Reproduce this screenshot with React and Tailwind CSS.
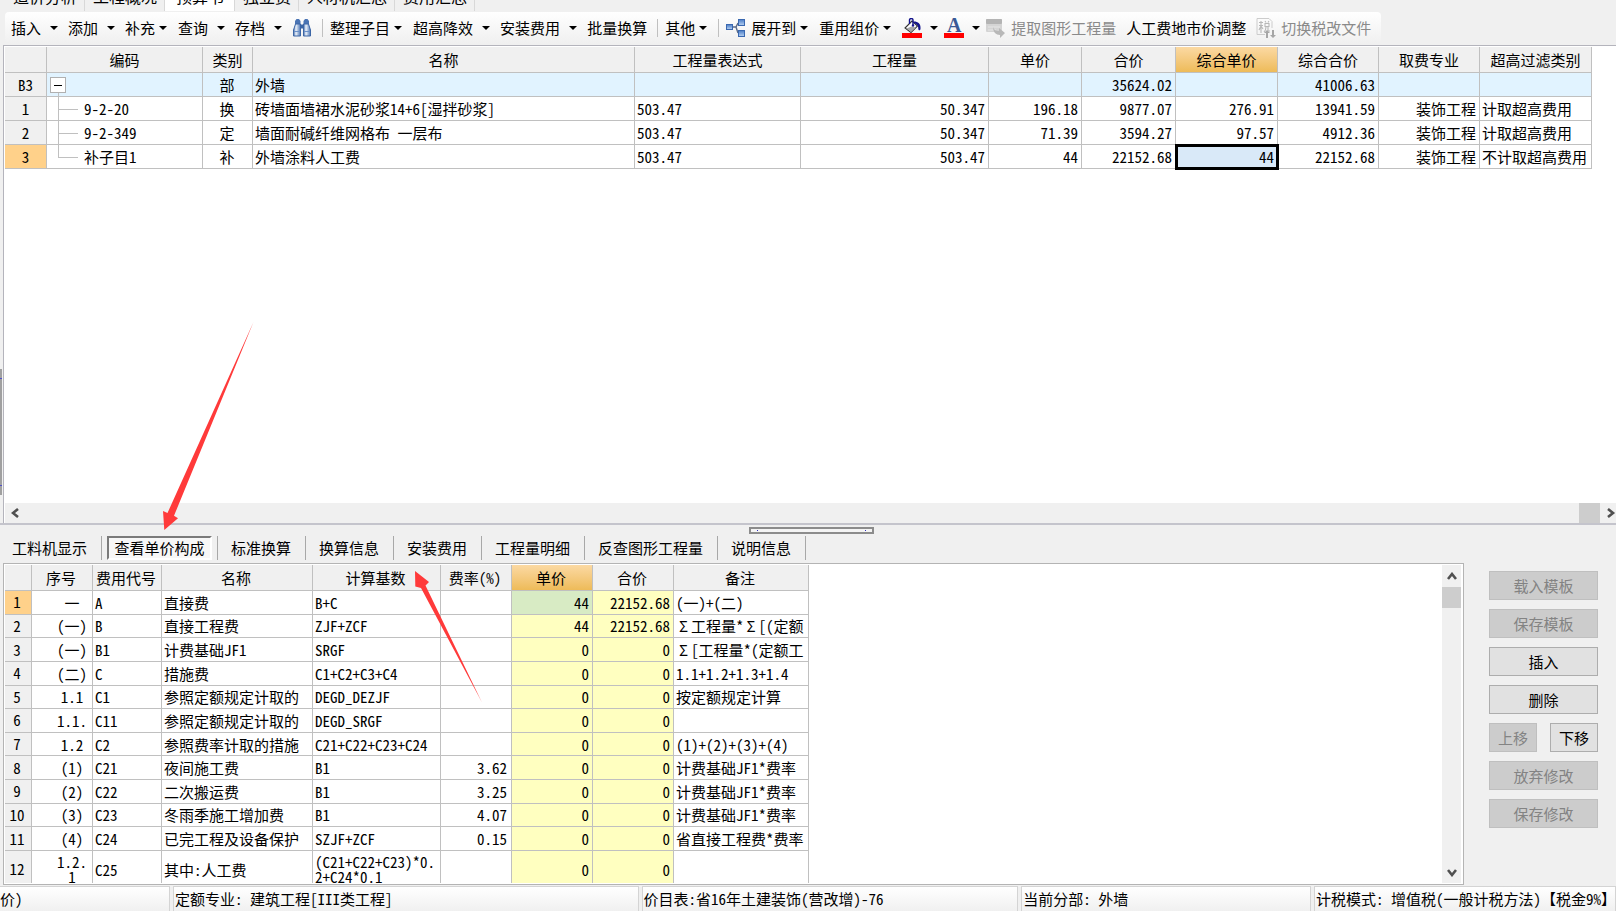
const fileTabs = ["造价分析", "工程概况", "预算书", "独立费", "人材机汇总", "费用汇总"];

function Caret() {
  return (
    <svg width="8" height="4" viewBox="0 0 8 4" className="shrink-0" aria-hidden="true">
      <path d="M0 0h8L4 4z" fill="#000" />
    </svg>
  );
}

function BinocularsIcon() {
  return (
    <svg width="20" height="18" viewBox="0 0 20 18" aria-hidden="true">
      <defs>
        <linearGradient id="bino" x1="0" x2="1">
          <stop offset="0" stopColor="#3c66a6" />
          <stop offset="0.35" stopColor="#eef4fc" />
          <stop offset="1" stopColor="#4a74b4" />
        </linearGradient>
      </defs>
      <path d="M4.500 0h2.500l1.500 2v3H3V2z" fill="#4a74b4" />
      <path d="M13 0h2.500L17 2v3h-5.500V2z" fill="#4a74b4" />
      <path d="M3.500 5h5v12h-7v-6z" fill="url(#bino)" stroke="#3c66a6" />
      <path d="M11.500 5h5l2 6v6h-7z" fill="url(#bino)" stroke="#3c66a6" />
      <path d="M8.500 5.500h3v4h-3z" fill="#3c66a6" />
      <path d="M2 12.500h6M12 12.500h6" stroke="#6a90c8" />
    </svg>
  );
}

function ExpandIcon() {
  return (
    <svg width="20" height="20" viewBox="0 0 20 20" aria-hidden="true">
      <defs>
        <linearGradient id="box" x1="0" y1="0" x2="0" y2="1">
          <stop offset="0" stopColor="#4a7cc6" />
          <stop offset="1" stopColor="#b8d2f2" />
        </linearGradient>
      </defs>
      <path d="M7 9h3L12 5M10 9l2 6" stroke="#5a6a88" strokeWidth="1.400" fill="none" />
      <rect x="0.500" y="6.500" width="6" height="5" fill="url(#box)" stroke="#3a68b0" />
      <rect x="12.500" y="1.500" width="6" height="6" fill="url(#box)" stroke="#3a68b0" />
      <rect x="12.500" y="12.500" width="6" height="6" fill="url(#box)" stroke="#3a68b0" />
    </svg>
  );
}

function FillIcon() {
  return (
    <svg width="20" height="20" viewBox="0 0 20 20" aria-hidden="true">
      <path d="M10 3l5.500 5-6.500 6.500L3 10z" fill="#fff" stroke="#333" strokeWidth="1.100" />
      <path d="M4.500 10.500l5-2 4.500 1-5 4.500z" fill="#a8a8a8" />
      <path d="M7.500 6V2C7.500 0 11 0 11 2v5" fill="none" stroke="#14148c" strokeWidth="1.400" />
      <circle cx="11" cy="7.500" r="1.200" fill="#14148c" />
      <path d="M12 3.500c4 0 7 2 6.500 7.500-.3 1.800-2 1.800-2.200 0C16.500 8 15 6 12 5z" fill="#14148c" />
      <rect x="0" y="15" width="20" height="5" fill="#f00" />
    </svg>
  );
}

function FontColorIcon() {
  return (
    <span className="flex h-5 w-5 flex-col items-center justify-end">
      <span className="font-['Liberation_Serif',serif] text-[20px] leading-[15px] font-bold text-[#3a5a96]">A</span>
      <span className="h-[5px] w-full bg-[#ff0000]" />
    </span>
  );
}

function ExtractIcon() {
  return (
    <svg width="20" height="20" viewBox="0 0 20 20" aria-hidden="true">
      <rect x="0" y="1" width="16" height="13" rx="1" fill="#d4d4d4" />
      <rect x="0" y="1" width="16" height="5" rx="1" fill="#b4b4b4" />
      <path d="M2 9h12M2 12h8" stroke="#e6e6e6" />
      <path d="M7 9c1 3 3 4 6 4v-3l6 5-5 5v-3c-4 0-7-3-7-8z" fill="#b8b8b8" />
    </svg>
  );
}

function TaxIcon() {
  return (
    <svg width="20" height="20" viewBox="0 0 20 20" aria-hidden="true">
      <path d="M1 .5h12l3 3V10M1 .5v16h8" fill="none" stroke="#cccccc" />
      <path d="M3 4.500h4M5 3v12M3 7.500h4M5 8l-2 4M5 8l2 3M9 3l1 1.500M13 3l-1 1.500M9 5.500h4v3H9zM10 9c0 3-1 4-2 5M12 9v4h2" fill="none" stroke="#b8b8b8" strokeWidth="1.100" />
      <path d="M11 12l3 3h-2v5h-2v-5H8z" fill="#a6a6a6" />
      <path d="M17 20l-3-3h2v-5h2v5h2z" fill="#a6a6a6" />
    </svg>
  );
}

const toolbar = [
  { label: "插入", kind: "split" },
  { label: "添加", kind: "split" },
  { label: "补充", kind: "menu" },
  { label: "查询", kind: "split" },
  { label: "存档", kind: "split" },
  { title: "查找", icon: BinocularsIcon },
  { kind: "sep" },
  { label: "整理子目", kind: "menu" },
  { label: "超高降效", kind: "split" },
  { label: "安装费用", kind: "split" },
  { label: "批量换算" },
  { kind: "sep" },
  { label: "其他", kind: "menu" },
  { kind: "sep" },
  { label: "展开到", kind: "menu", icon: ExpandIcon },
  { label: "重用组价", kind: "menu" },
  { title: "填充颜色", kind: "color", icon: FillIcon },
  { title: "字体颜色", kind: "color", icon: FontColorIcon },
  { label: "提取图形工程量", icon: ExtractIcon, disabled: true },
  { label: "人工费地市价调整" },
  { label: "切换税改文件", icon: TaxIcon, disabled: true },
];

const toolSpace = {
  menu: "gap-1 pr-[11px]",
  split: "gap-[9px] pr-[10px]",
  color: "gap-2 pr-[6px]",
};

function ToolItem({ item }) {
  if (item.kind === "sep") {
    return <span className="mr-[7px] h-[18px] w-px shrink-0 bg-[#c0c0c0]" />;
  }
  const Icon = item.icon;
  return (
    <button
      type="button"
      aria-label={item.label || item.title}
      disabled={item.disabled}
      className={`flex h-full shrink-0 items-center whitespace-nowrap disabled:text-[#8a8a8a] ${
        toolSpace[item.kind] || "pr-[10px]"
      }`}
    >
      <span className="flex items-center gap-[5px]">
        {Icon && <Icon />}
        {item.label}
      </span>
      {item.kind && <Caret />}
    </button>
  );
}

const grid1Heads = ["", "编码", "类别", "名称", "工程量表达式", "工程量", "单价", "合价", "综合单价", "综合合价", "取费专业", "超高过滤类别"];
const grid1Rows = [
  ["B3", "", "部", "外墙", "", "", "", "35624.02", "", "41006.63", "", ""],
  ["1", "9-2-20", "换", "砖墙面墙裙水泥砂浆14+6[湿拌砂浆]", "503.47", "50.347", "196.18", "9877.07", "276.91", "13941.59", "装饰工程", "计取超高费用"],
  ["2", "9-2-349", "定", "墙面耐碱纤维网格布 一层布", "503.47", "50.347", "71.39", "3594.27", "97.57", "4912.36", "装饰工程", "计取超高费用"],
  ["3", "补子目1", "补", "外墙涂料人工费", "503.47", "503.47", "44", "22152.68", "44", "22152.68", "装饰工程", "不计取超高费用"],
];
const grid1Align = ["text-center", "text-left", "text-center", "text-left", "text-left", "text-right", "text-right", "text-right", "text-right", "text-right", "text-right", "text-left"];

const cell = "overflow-hidden border-r border-b border-[#c0c0c0] p-0 whitespace-nowrap";
const headSel = "bg-linear-to-b from-[#fbd9a2] to-[#eebb58]";

function TreeCell({ text, root, last }) {
  if (root) {
    return (
      <div className="relative h-[23px]">
        <span className="absolute top-4 bottom-0 left-[11px] w-px bg-[#c0c0c0]" />
        <button
          type="button"
          aria-label="折叠"
          className="absolute top-1 left-[3px] flex h-4 w-4 items-center justify-center border border-[#b0b0b0] bg-white"
        >
          <span className="h-px w-2 bg-black" />
        </button>
      </div>
    );
  }
  return (
    <div className="relative h-[23px] pl-[37px] leading-[23px]">
      <span className={`absolute top-0 left-[11px] w-px bg-[#c0c0c0] ${last ? "h-3" : "h-full"}`} />
      <span className="absolute top-3 left-[11px] h-px w-5 bg-[#c0c0c0]" />
      {text}
    </div>
  );
}

function BudgetGrid() {
  return (
    <table className="w-[1587px] table-fixed border-separate border-spacing-0">
      <colgroup>
        <col className="w-[42px]" />
        <col className="w-[156px]" />
        <col className="w-[50px]" />
        <col className="w-[382px]" />
        <col className="w-[166px]" />
        <col className="w-[188px]" />
        <col className="w-[93px]" />
        <col className="w-[94px]" />
        <col className="w-[102px]" />
        <col className="w-[101px]" />
        <col className="w-[101px]" />
        <col className="w-[112px]" />
      </colgroup>
      <thead>
        <tr className="h-[26px]">
          {grid1Heads.map((h, i) => (
            <th key={i} className={`${cell} font-normal ${i === 8 ? headSel : "bg-[#f0f0f0]"}`}>
              {h}
            </th>
          ))}
        </tr>
      </thead>
      <tbody>
        {grid1Rows.map((row, r) => (
          <tr key={r} className={r === 0 ? "bg-[#e1f3ff]" : "bg-white"}>
            {row.map((v, c) => {
              if (c === 0) {
                return (
                  <th key={c} scope="row" className={`${cell} font-normal ${r === 3 ? "bg-[#ffd18a]" : "bg-[#f0f0f0]"}`}>
                    {v}
                  </th>
                );
              }
              if (c === 1) {
                return (
                  <td key={c} className={cell}>
                    <TreeCell text={v} root={r === 0} last={r === 3} />
                  </td>
                );
              }
              const selected = r === 3 && c === 8;
              return (
                <td
                  key={c}
                  className={`${cell} ${grid1Align[c]} ${
                    selected ? "bg-[#d9e9f8] outline-[3px] -outline-offset-2 outline-black" : ""
                  }`}
                >
                  <div className="pr-[3px] pl-[2px]">{v}</div>
                </td>
              );
            })}
          </tr>
        ))}
      </tbody>
    </table>
  );
}

const grid2Heads = ["", "序号", "费用代号", "名称", "计算基数", "费率(%)", "单价", "合价", "备注"];
const grid2Rows = [
  ["一", "A", "直接费", "B+C", "", "44", "22152.68", "(一)+(二)"],
  ["(一)", "B", "直接工程费", "ZJF+ZCF", "", "44", "22152.68", "Σ工程量*Σ[(定额"],
  ["(一)", "B1", "计费基础JF1", "SRGF", "", "0", "0", "Σ[工程量*(定额工"],
  ["(二)", "C", "措施费", "C1+C2+C3+C4", "", "0", "0", "1.1+1.2+1.3+1.4"],
  ["1.1", "C1", "参照定额规定计取的", "DEGD_DEZJF", "", "0", "0", "按定额规定计算"],
  ["1.1.", "C11", "参照定额规定计取的", "DEGD_SRGF", "", "0", "0", ""],
  ["1.2", "C2", "参照费率计取的措施", "C21+C22+C23+C24", "", "0", "0", "(1)+(2)+(3)+(4)"],
  ["(1)", "C21", "夜间施工费", "B1", "3.62", "0", "0", "计费基础JF1*费率"],
  ["(2)", "C22", "二次搬运费", "B1", "3.25", "0", "0", "计费基础JF1*费率"],
  ["(3)", "C23", "冬雨季施工增加费", "B1", "4.07", "0", "0", "计费基础JF1*费率"],
  ["(4)", "C24", "已完工程及设备保护", "SZJF+ZCF", "0.15", "0", "0", "省直接工程费*费率"],
  ["1.2.\n1", "C25", "其中:人工费", "(C21+C22+C23)*0.\n2+C24*0.1", "", "0", "0", ""],
];
const grid2Align = [
  "pl-5 text-center",
  "pl-[2px] text-left",
  "pl-[2px] text-left",
  "pl-[2px] text-left",
  "pr-1 text-right",
  "pr-[3px] text-right",
  "pr-[3px] text-right",
  "pl-[2px] text-left",
];

function Remark({ text }) {
  return text.split(/(Σ)/).map((part, i) =>
    part === "Σ" ? (
      <span key={i} className="inline-block w-[15px] text-center">
        Σ
      </span>
    ) : (
      part
    )
  );
}

function CostGrid() {
  return (
    <table className="h-[324px] w-[804px] table-fixed border-separate border-spacing-0">
      <colgroup>
        <col className="w-[27px]" />
        <col className="w-[61px]" />
        <col className="w-[69px]" />
        <col className="w-[151px]" />
        <col className="w-[128px]" />
        <col className="w-[71px]" />
        <col className="w-[81px]" />
        <col className="w-[81px]" />
        <col className="w-[135px]" />
      </colgroup>
      <thead>
        <tr className="h-[26px]">
          {grid2Heads.map((h, i) => (
            <th key={i} className={`${cell} font-normal ${i === 6 ? headSel : "bg-[#f0f0f0]"}`}>
              <div className="pr-[2px]">{h}</div>
            </th>
          ))}
        </tr>
      </thead>
      <tbody>
        {grid2Rows.map((row, r) => (
          <tr key={r} className={r === 11 ? "h-[37px]" : "h-[23px]"}>
            <th scope="row" className={`${cell} font-normal ${r === 0 ? "bg-[#ffd18a]" : "bg-[#f0f0f0]"}`}>
              <div className="pr-[2px]">{r + 1}</div>
            </th>
            {row.map((v, c) => {
              const bg = c === 5 && r === 0 ? "bg-[#d8ebc4]" : c === 5 || c === 6 ? "bg-[#ffffc0]" : "bg-white";
              return (
                <td key={c} className={`${cell} ${bg}`}>
                  <div className={`leading-[15px] whitespace-pre ${grid2Align[c]}`}>
                    {c === 7 ? <Remark text={v} /> : v}
                  </div>
                </td>
              );
            })}
          </tr>
        ))}
      </tbody>
    </table>
  );
}

function Chevron({ d, w, h }) {
  return (
    <svg width={w} height={h} viewBox={`0 0 ${w} ${h}`} aria-hidden="true">
      <path d={d} fill="none" stroke="#505050" strokeWidth="2.600" />
    </svg>
  );
}

const detailTabs = ["工料机显示", "查看单价构成", "标准换算", "换算信息", "安装费用", "工程量明细", "反查图形工程量", "说明信息"];

function DetailTabs() {
  return (
    <ul className="flex h-6 items-stretch">
      {detailTabs.map((t, i) =>
        i === 1 ? (
          <li key={t} className="flex border-r border-[#a8a8a8] px-[5px]">
            <button
              type="button"
              className="w-[105px] border-2 border-t-[#7a7a7a] border-r-white border-b-white border-l-[#7a7a7a] bg-[#f7f7f7] leading-5 whitespace-nowrap"
            >
              {t}
            </button>
          </li>
        ) : (
          <li key={t} className="flex border-r border-[#a8a8a8] pr-[14px] pl-[13px]">
            <button type="button" className="whitespace-nowrap">
              {t}
            </button>
          </li>
        )
      )}
    </ul>
  );
}

function PanelButton({ children, disabled, narrow }) {
  return (
    <button
      type="button"
      disabled={disabled}
      className={`h-[29px] border border-[#adadad] bg-[#e1e1e1] whitespace-nowrap disabled:border-[#bfbfbf] disabled:bg-[#cccccc] disabled:text-[#838383] ${
        narrow ? "w-12" : "w-full"
      }`}
    >
      {children}
    </button>
  );
}

const statusCell = "overflow-hidden border border-b-0 border-[#d4d4d4] bg-linear-to-b from-white to-[#f0f0f0] pl-px leading-6 whitespace-pre";

export default function App() {
  return (
    <div className="relative flex h-screen flex-col overflow-hidden bg-[#f0f0f0] font-['Noto_Sans_Mono_CJK_SC','Noto_Sans_CJK_SC',sans-serif] text-[15px] leading-5 text-black">
      <nav className="flex h-[11px] shrink-0 items-end overflow-hidden pl-[5px] text-[16px]">
        {fileTabs.map((t, i) => (
          <button
            key={t}
            type="button"
            className={`border-r border-[#d8d8d8] pr-[7px] pb-[5px] pl-2 whitespace-nowrap ${i === 2 ? "w-[70px] bg-white" : ""}`}
          >
            {t}
          </button>
        ))}
      </nav>

      <div className="h-[34px] shrink-0 pt-px pl-[5px]">
        <div className="flex h-[31px] w-fit items-center rounded bg-linear-to-b from-white to-[#f0f0f0] pl-[6px]">
          {toolbar.map((item, i) => (
            <ToolItem key={i} item={item} />
          ))}
        </div>
      </div>

      <main className="ml-[3px] flex min-h-0 flex-1 flex-col overflow-hidden border-t border-l border-[#b4b4bc] bg-white pt-px pl-px">
        <div className="min-h-0 flex-1 overflow-hidden">
          <BudgetGrid />
        </div>
        <div className="flex h-5 shrink-0 items-center bg-[#f0f0f0] pl-[6px]">
          <Chevron w={8} h={10} d="M7 1L2 5l5 4" />
          <span className="ml-auto h-full w-[21px] bg-[#cdcdcd]" />
          <span className="ml-[7px]">
            <Chevron w={9} h={10} d="M1 1l5 4-5 4" />
          </span>
        </div>
      </main>

      <section className="flex shrink-0 flex-col border-t-2 border-[#c4c4cc] pl-[3px]">
        <div className="-ml-1 flex h-[38px] flex-col">
          <div className="flex h-[11px] justify-center pt-[2px] pl-2">
            <span className="flex h-[7px] w-[125px] items-center justify-between border-2 border-[#8c8c8c] bg-[#f4f4f4] px-[6px]">
              <span className="h-px w-px bg-[#3030c0]" />
              <span className="h-px w-px bg-[#3030c0]" />
            </span>
          </div>
          <DetailTabs />
        </div>
        <div className="flex">
          <div className="flex h-[322px] min-w-0 flex-1 justify-between overflow-hidden border border-[#b4b4b4] bg-white pt-px pr-[2px] pb-px pl-px">
            <div className="h-[318px] overflow-hidden">
              <CostGrid />
            </div>
            <div className="flex h-[318px] w-[19px] flex-col items-center bg-[#f0f0f0]">
              <span className="flex h-[22px] items-center">
                <Chevron w={10} h={8} d="M1 7l4-5 4 5" />
              </span>
              <span className="h-[21px] w-full bg-[#cdcdcd]" />
              <span className="mt-auto flex h-[20px] items-center">
                <Chevron w={10} h={8} d="M1 1l4 5 4-5" />
              </span>
            </div>
          </div>
          <div className="mr-[18px] ml-[25px] flex w-[109px] shrink-0 flex-col gap-[9px] pt-2">
            <PanelButton disabled>载入模板</PanelButton>
            <PanelButton disabled>保存模板</PanelButton>
            <PanelButton>插入</PanelButton>
            <PanelButton>删除</PanelButton>
            <div className="flex justify-between">
              <PanelButton narrow disabled>上移</PanelButton>
              <PanelButton narrow>下移</PanelButton>
            </div>
            <PanelButton disabled>放弃修改</PanelButton>
            <PanelButton disabled>保存修改</PanelButton>
          </div>
        </div>
      </section>

      <footer className="grid shrink-0 grid-cols-[170px_466fr_377fr_290fr_302px] gap-[3px] pt-px">
        <div className="overflow-hidden border-t border-r border-[#d4d4d4] bg-linear-to-b from-white to-[#f0f0f0] leading-6">价)</div>
        <div className={statusCell}>定额专业: 建筑工程[III类工程]</div>
        <div className={statusCell}>价目表:省16年土建装饰(营改增)-76</div>
        <div className={statusCell}>当前分部: 外墙</div>
        <div className={statusCell}>计税模式: 增值税(一般计税方法)【税金9%】</div>
      </footer>

      <div className="absolute top-[369px] left-0 flex h-[126px] w-[2px] flex-col justify-between bg-[#a0a0a0] py-[9px]">
        <span className="h-px w-full bg-[#5050c8]" />
        <span className="h-px w-full bg-[#5050c8]" />
      </div>

      <svg className="pointer-events-none absolute top-0 left-0" width="520" height="720" viewBox="0 0 520 720" aria-hidden="true">
        <path d="M253.500 322L167.500 513l-4.500-2 1.300 19 13.700-11.700-4-2.500z" fill="#ff3a3a" />
        <path d="M415 571l.3 15.500 5.700 1.500L482 702.500 425.500 585.500l3.500-3.500z" fill="#ff3a3a" />
      </svg>
    </div>
  );
}
